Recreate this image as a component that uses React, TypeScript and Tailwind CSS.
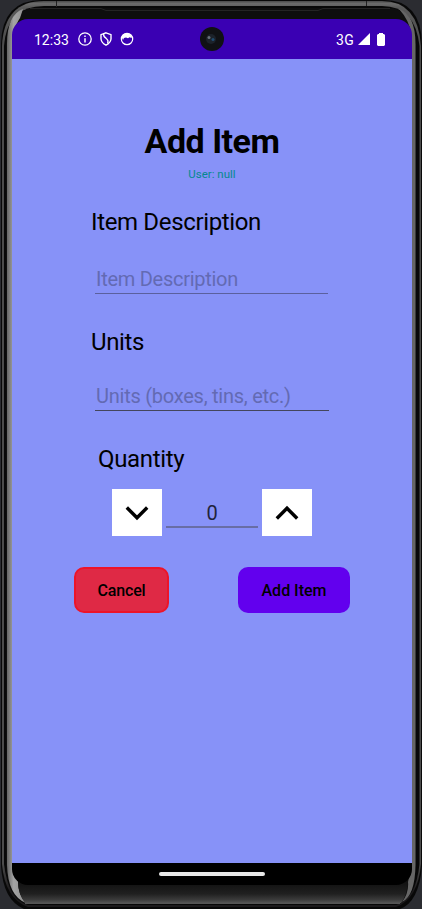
import React from "react";

function DeviceFrame() {
  return (
    <svg className="absolute inset-0" width="422" height="909" viewBox="0 0 422 909" fill="none" aria-hidden="true">
      <defs>
        <linearGradient id="top" x1="0" y1="0" x2="0" y2="909" gradientUnits="userSpaceOnUse">
          <stop offset="0" stopColor="#3c3c3c" />
          <stop offset="0.004" stopColor="#6c6c6c" />
          <stop offset="0.008" stopColor="#5a5a5a" />
          <stop offset="0.05" stopColor="#4c4c4c" />
          <stop offset="0.95" stopColor="#4c4c4c" />
          <stop offset="0.98" stopColor="#1c1a1c" />
        </linearGradient>
        <linearGradient id="bottom" x1="0" y1="0" x2="0" y2="1">
          <stop offset="0" stopColor="#0e0e0e" />
          <stop offset="0.6" stopColor="#202020" />
          <stop offset="0.85" stopColor="#3a3a3a" />
          <stop offset="1" stopColor="#555" />
        </linearGradient>
        <linearGradient id="side" x1="0" y1="0" x2="1" y2="0">
          <stop offset="0" stopColor="#666" />
          <stop offset="0.35" stopColor="#a4a4a4" />
          <stop offset="1" stopColor="#8c8c8c" />
        </linearGradient>
      </defs>
      <rect width="422" height="909" fill="#2b2c31" />
      <path d="M1 44Q2 0 42 0H384Q421 0 422 44V866Q419 902 400 909H24Q3 900 1 866Z" fill="#080808" />
      <path d="M2 46Q4 1 44 1H382Q418 1 421 46V864Q418 899 396 907H28Q5 899 2 864Z" fill="url(#top)" />
      <path d="M4 46Q7 6 44 6H382Q415 6 419.500 46V864Q416 899 396 905H28Q8 899 4 864Z" fill="#080808" />
      <path d="M6 44Q8 8 38 8H387Q415.500 8 416 44V864Q414 900 396 904H27Q8 900 6 864Z" fill="#0e0e0e" />
      <path d="M23 9Q7 15 7 44V865Q8 896 26 903Q18 895 18 882L13 868V33Q17 22 20 18Z" fill="url(#side)" />
      <path d="M399 9Q415.500 15 415.500 44V865Q415 896 402 902Q409 893 408 882L411 868V33Q409 20 399 9Z" fill="#666" />
      <path d="M18 880H408Q407 896 401 903H25Q18 894 18 880Z" fill="url(#bottom)" />
      <path d="M25 903.500H400" stroke="#555" />
      <path d="M56.500 1V7M366.500 1V6" stroke="#222" />
      <path d="M30 8.500H101L106 10.500H318L323 8.500H390" stroke="#242424" />
    </svg>
  );
}

function StatusBar() {
  return (
    <header className="flex h-10 items-center bg-[#3a00b3] pl-[22px] text-white">
      <span className="w-11 pt-[2px] text-[14px] leading-4">12:33</span>
      <svg width="14" height="14" viewBox="0 0 14 14" fill="none" stroke="white" strokeWidth="1.3">
        <circle cx="7" cy="7" r="6.200" />
        <path d="M7 6.200V10.500M7 3.500V5" strokeWidth="1.500" />
      </svg>
      <svg className="ml-2" width="12" height="14" viewBox="0 0 12 14" fill="none" stroke="white" strokeWidth="1.4">
        <path d="M6 0.800L11 2.700V7Q10.500 11 6 13.200Q1.500 11 1 7V2.700Z" />
        <path d="M3.700 2.200Q3.200 4.500 6 6.200Q9 8.500 7.500 11.500" />
      </svg>
      <svg className="ml-2" width="14" height="14" viewBox="0 0 14 14" fill="none">
        <circle cx="7" cy="7" r="5.700" stroke="white" strokeWidth="1.200" />
        <path d="M2 3.500Q7 -1 12 3.500L11.500 6L9.500 5.200L8 6.200L6 5.500L4 6L3 8L2 6Z" fill="white" />
      </svg>
      <svg className="ml-[66px]" width="24" height="24" viewBox="0 0 24 24">
        <circle cx="12" cy="12" r="12" fill="#101114" />
        <circle cx="11" cy="12" r="5" fill="#1c222a" />
        <circle cx="9" cy="10.500" r="1.500" fill="#68727c" />
        <circle cx="13" cy="12.500" r="1.500" fill="#204c70" />
      </svg>
      <span className="ml-[112px] w-[22px] pt-px text-[14px] leading-4 tracking-[0.4px]">3G</span>
      <svg width="12" height="12" viewBox="0 0 12 12" fill="white">
        <path d="M12 0V12H0Z" />
      </svg>
      <svg className="ml-[7px]" width="8" height="13" viewBox="0 0 8 13" fill="white">
        <path d="M2 0H6V1H7L8 2V12L7 13H1L0 12V2L1 1H2Z" />
      </svg>
    </header>
  );
}

function StepButton({ direction }: { direction: "up" | "down" }) {
  return (
    <button aria-label={direction} className="flex h-[47px] w-[50px] items-center justify-center bg-white">
      <svg width="24" height="16" viewBox="0 0 24 16" fill="none" stroke="black" strokeWidth="3.400">
        <path d={direction === "down" ? "M1.800 2.500L12 12.800L22.200 2.500" : "M1.800 13.500L12 3.200L22.200 13.500"} />
      </svg>
    </button>
  );
}

export default function App() {
  return (
    <div className="relative h-[909px] w-[422px] overflow-hidden font-[Roboto,sans-serif]">
      <DeviceFrame />
      <div className="relative ml-3 flex h-[885px] w-[400px] flex-col pt-[19px]">
        <div className="flex min-h-0 flex-1 flex-col overflow-hidden rounded-[16px]">
          <StatusBar />
          <main className="flex h-[804px] flex-col bg-[#8792f8] text-black">
            <h1 className="mt-[62px] text-center text-[34px] leading-10 font-bold tracking-[-0.5px]">Add Item</h1>
            <p className="mt-[5px] text-center text-[11.500px] leading-4 text-[#05898e]">User: null</p>
            <label className="mt-[26px] ml-[79px] text-[24px] leading-7 tracking-[-0.35px]">Item Description</label>
            <div className="mt-[29px] ml-[83px] h-[29px] w-[233px] border-b border-[#5b609e] pl-[1px] text-[20px] leading-7 tracking-[-0.27px] text-[#636ab3]">Item Description</div>
            <label className="mt-[34px] ml-[79px] text-[24px] leading-7 tracking-[-0.35px]">Units</label>
            <div className="mt-[26px] ml-[83px] h-[29px] w-[234px] border-b border-[#44465c] pl-[1px] text-[20px] leading-7 tracking-[-0.25px] text-[#636ab3]">Units (boxes, tins, etc.)</div>
            <label className="mt-[34px] ml-[86px] text-[24px] leading-7 tracking-[-0.35px]">Quantity</label>
            <div className="mt-4 ml-[100px] flex">
              <StepButton direction="down" />
              <div className="mx-1 h-[39px] w-[92px] border-b-2 border-[#686da5] pt-[10px] text-center text-[20px] leading-7 text-[#21233c]">0</div>
              <StepButton direction="up" />
            </div>
            <div className="mt-[31px] ml-[62px] flex h-[46px] w-[276px] justify-between text-[16px] font-medium">
              <button className="w-[95px] rounded-[10px] border-2 border-[#ed1429] bg-[#df2945] pt-px tracking-[-0.15px]">Cancel</button>
              <button className="w-[112px] rounded-[10px] bg-[#6200ee] pt-px">Add Item</button>
            </div>
          </main>
          <footer className="flex h-[22px] justify-center bg-black pt-[9px]">
            <div className="h-1 w-[106px] rounded-full bg-[#e8e8e8]" />
          </footer>
        </div>
      </div>
    </div>
  );
}
